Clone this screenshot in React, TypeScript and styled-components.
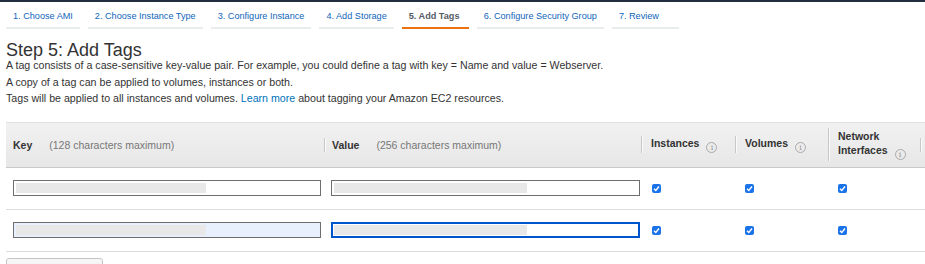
import React from 'react'
import styled, { createGlobalStyle } from 'styled-components'

const GlobalStyle = createGlobalStyle`
  html, body {
    margin: 0;
    padding: 0;
    background: #fff;
    overflow: hidden;
  }
  body {
    font-family: 'Liberation Sans', Arial, sans-serif;
    color: #333;
  }
`

const Page = styled.div`
  width: 925px;
  height: 264px;
  overflow: hidden;
  border-top: 2px solid #232f3e;
  box-sizing: border-box;
`

const Steps = styled.nav`
  display: flex;
  gap: 8px;
  padding: 0 6px;
`

const Step = styled.div<{ $active?: boolean }>`
  box-sizing: border-box;
  height: 27px;
  min-width: 67px;
  padding: 3px 7px 0;
  display: flex;
  align-items: center;
  font-size: 9.15px;
  color: ${p => (p.$active ? '#545b64' : '#1166bb')};
  font-weight: ${p => (p.$active ? 700 : 400)};
  border-bottom: 2px solid ${p => (p.$active ? '#ec7211' : '#eaeded')};
  white-space: nowrap;
`

const Body = styled.div`
  padding: 0 6px;
`

const Title = styled.h1`
  margin: 11px 0 -3px;
  font-size: 18px;
  line-height: 20px;
  font-weight: 400;
  color: #333;
`

const Desc = styled.p`
  margin: 0;
  font-size: 10.65px;
  line-height: 16.5px;
  color: #333;
`

const Link = styled.a`
  color: #0073bb;
  text-decoration: none;
`

const Table = styled.div`
  margin-top: 15px;
  width: 960px;
`

const Grid = styled.div<{ $header?: boolean }>`
  display: grid;
  grid-template-columns: 318px 317px 94px 93px 92px 1fr;
  align-items: center;
  height: ${p => (p.$header ? '44px' : '41px')};
  background: ${p => (p.$header ? 'linear-gradient(#f1f1f1, #e7e7e7)' : '#fff')};
  border-top: ${p => (p.$header ? '1px solid #e2e2e2' : 'none')};
  border-bottom: 1px solid ${p => (p.$header ? '#c9c9c9' : '#dcdcdc')};
`

const HeadCell = styled.div<{ $first?: boolean }>`
  display: flex;
  align-items: center;
  padding-left: ${p => (p.$first ? '7px' : '0')};
`

const HeadLabel = styled.div<{ $sep?: number; $narrow?: boolean }>`
  font-size: 10.5px;
  line-height: 14px;
  font-weight: 700;
  color: #333;
  padding-left: ${p => (p.$sep ? `${p.$sep}px` : '0')};
  border-left: ${p => (p.$sep ? '1px solid #c8c8c8' : 'none')};
  box-shadow: ${p => (p.$sep ? 'inset 1px 0 0 #fafafa' : 'none')};
  max-width: ${p => (p.$narrow ? '70px' : 'none')};
  ${p => (p.$narrow ? 'padding-top: 1px; padding-bottom: 1px;' : '')}
`

const Hint = styled.span`
  font-weight: 400;
  color: #777;
  margin-left: 17px;
`

const Info = styled.span`
  display: inline-block;
  box-sizing: border-box;
  width: 11px;
  height: 11px;
  line-height: 9px;
  text-align: center;
  margin-left: 7px;
  border: 1px solid #aaa;
  border-radius: 50%;
  font-size: 8px;
  font-weight: 400;
  color: #999;
  vertical-align: -3px;
  font-family: 'DejaVu Serif', serif;
`

const Cell = styled.div<{ $pad: number }>`
  padding-left: ${p => p.$pad}px;
  display: flex;
  align-items: center;
`

const Field = styled.div<{ $focus?: boolean; $filled?: boolean; $w: number }>`
  box-sizing: border-box;
  width: ${p => p.$w}px;
  height: 16px;
  padding: ${p => (p.$focus ? '1px 1px' : '2px 2px')};
  border: ${p => (p.$focus ? '2px solid #0055cc' : '1px solid #6e6e6e')};
  background: ${p => (p.$filled ? '#e8f0fe' : '#fff')};
  display: flex;
`

const Blur = styled.span<{ $w: number }>`
  width: ${p => p.$w}px;
  height: 100%;
  background: #e8e8e8;
`

const Check = styled.span`
  width: 9px;
  height: 9px;
  border-radius: 2px;
  background: #1a73e8;
  display: inline-flex;
  align-items: center;
  justify-content: center;
`

const AddButton = styled.button`
  margin-top: 6px;
  width: 97px;
  height: 24px;
  border: 1px solid #c4c4c4;
  border-radius: 3px;
  background: linear-gradient(#f8f8f8, #e8e8e8);
`

function Tick() {
  return (
    <Check>
      <svg width="7" height="7" viewBox="0 0 7 7">
        <path d="M1 3.8 L2.8 5.5 L6 1.5" fill="none" stroke="#fff" strokeWidth="1.4" />
      </svg>
    </Check>
  )
}

const STEPS = [
  '1. Choose AMI',
  '2. Choose Instance Type',
  '3. Configure Instance',
  '4. Add Storage',
  '5. Add Tags',
  '6. Configure Security Group',
  '7. Review',
]

const ROWS = [
  { filled: false, focus: false },
  { filled: true, focus: true },
]

export default function App() {
  return (
    <Page>
      <GlobalStyle />
      <Steps>
        {STEPS.map((s, i) => (
          <Step key={s} $active={i === 4}>{s}</Step>
        ))}
      </Steps>
      <Body>
        <Title>Step 5: Add Tags</Title>
        <Desc>A tag consists of a case-sensitive key-value pair. For example, you could define a tag with key = Name and value = Webserver.</Desc>
        <Desc>A copy of a tag can be applied to volumes, instances or both.</Desc>
        <Desc>
          Tags will be applied to all instances and volumes. <Link href="#">Learn more</Link> about tagging your Amazon EC2 resources.
        </Desc>
        <Table>
          <Grid $header>
            <HeadCell $first>
              <HeadLabel>Key<Hint>(128 characters maximum)</Hint></HeadLabel>
            </HeadCell>
            <HeadCell>
              <HeadLabel $sep={7}>Value<Hint>(256 characters maximum)</Hint></HeadLabel>
            </HeadCell>
            <HeadCell>
              <HeadLabel $sep={9}>Instances<Info>i</Info></HeadLabel>
            </HeadCell>
            <HeadCell>
              <HeadLabel $sep={9}>Volumes<Info>i</Info></HeadLabel>
            </HeadCell>
            <HeadCell>
              <HeadLabel $sep={9} $narrow>Network Interfaces<Info>i</Info></HeadLabel>
            </HeadCell>
            <HeadCell>
              <HeadLabel $sep={9}>&nbsp;</HeadLabel>
            </HeadCell>
          </Grid>
          {ROWS.map((r, i) => (
            <Grid key={i}>
              <Cell $pad={7}>
                <Field $w={308} $filled={r.filled}><Blur $w={190} /></Field>
              </Cell>
              <Cell $pad={7}>
                <Field $w={309} $focus={r.focus}><Blur $w={193} /></Field>
              </Cell>
              <Cell $pad={11}><Tick /></Cell>
              <Cell $pad={10}><Tick /></Cell>
              <Cell $pad={10}><Tick /></Cell>
              <Cell $pad={0} />
            </Grid>
          ))}
        </Table>
        <AddButton aria-label="Add Tag" />
      </Body>
    </Page>
  )
}
